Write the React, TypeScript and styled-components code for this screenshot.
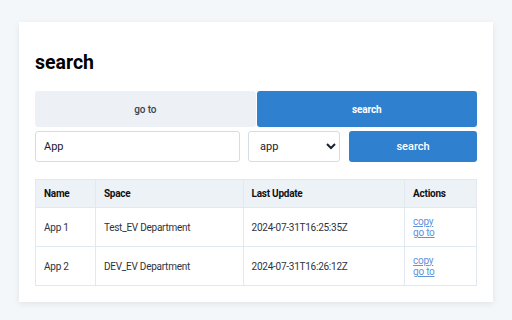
import React from "react";
import styled, { createGlobalStyle } from "styled-components";

const Global = createGlobalStyle`
  html, body { margin: 0; padding: 0; background: #f4f7fa; }
  body { font-family: Roboto, "Liberation Sans", Arial, sans-serif; color: #1a202c; }
  * { box-sizing: border-box; }
`;

const Page = styled.div`
  padding: 22px 19px 18px;
`;

const Card = styled.div`
  background: #ffffff;
  padding: 16px 16px 16px;
  box-shadow: 0 2px 6px rgba(0, 0, 0, 0.08);
`;

const Title = styled.h1`
  margin: 13px 0 16px;
  font-size: 19.5px;
  font-weight: 700;
  line-height: 24px;
  color: #000;
`;

const Tabs = styled.div`
  display: grid;
  grid-template-columns: 1fr 1fr;
  gap: 1px;
`;

const Tab = styled.button<{ $active?: boolean }>`
  height: 36px;
  border: none;
  border-radius: 3px;
  font-family: inherit;
  font-size: 10px;
  letter-spacing: -0.1px;
  font-weight: ${(p) => (p.$active ? 700 : 500)};
  background: ${(p) => (p.$active ? "#2f80cf" : "#edf1f5")};
  color: ${(p) => (p.$active ? "#ffffff" : "#3b4350")};
`;

const SearchRow = styled.div`
  display: grid;
  grid-template-columns: 205px 92px 1fr;
  gap: 8px;
  margin-top: 4px;
`;

const Input = styled.input`
  height: 31px;
  border: 1px solid #d5dce5;
  border-radius: 3px;
  padding: 0 8px;
  font-family: inherit;
  font-size: 11px;
  color: #1a202c;
`;

const Select = styled.select`
  height: 31px;
  border: 1px solid #d5dce5;
  border-radius: 3px;
  padding: 0 7px;
  font-family: inherit;
  font-size: 11px;
  color: #1a202c;
  background: #fff;
`;

const Button = styled.button`
  height: 31px;
  margin-left: 1px;
  border: none;
  border-radius: 3px;
  background: #2f80cf;
  color: #fff;
  font-family: inherit;
  font-size: 11px;
  font-weight: 500;
`;

const Table = styled.table`
  margin-top: 17px;
  width: 100%;
  border-collapse: collapse;
  font-size: 10px;
  letter-spacing: -0.25px;
`;

const Th = styled.th<{ $w: number }>`
  width: ${(p) => p.$w}px;
  height: 28px;
  padding: 0 8px;
  text-align: left;
  font-weight: 700;
  color: #111;
  background: #edf2f7;
  border: 1px solid #e2e8f0;
`;

const Td = styled.td`
  height: 39px;
  padding: 0 8px;
  color: #2d3340;
  border: 1px solid #e2e8f0;
  vertical-align: middle;
`;

const Links = styled.div`
  display: flex;
  flex-direction: column;
  line-height: 11.5px;
`;

const Link = styled.a`
  color: #5f93dc;
  text-decoration: underline;
  font-size: 10px;
`;

const rows = [
  { name: "App 1", space: "Test_EV Department", updated: "2024-07-31T16:25:35Z" },
  { name: "App 2", space: "DEV_EV Department", updated: "2024-07-31T16:26:12Z" },
];

export default function App() {
  return (
    <>
      <Global />
      <Page>
        <Card>
          <Title>search</Title>
          <Tabs>
            <Tab>go to</Tab>
            <Tab $active>search</Tab>
          </Tabs>
          <SearchRow>
            <Input defaultValue="App" />
            <Select defaultValue="app">
              <option value="app">app</option>
            </Select>
            <Button>search</Button>
          </SearchRow>
          <Table>
            <thead>
              <tr>
                <Th $w={60}>Name</Th>
                <Th $w={148}>Space</Th>
                <Th $w={162}>Last Update</Th>
                <Th $w={72}>Actions</Th>
              </tr>
            </thead>
            <tbody>
              {rows.map((r) => (
                <tr key={r.name}>
                  <Td>{r.name}</Td>
                  <Td>{r.space}</Td>
                  <Td>{r.updated}</Td>
                  <Td>
                    <Links>
                      <Link href="#">copy</Link>
                      <Link href="#">go to</Link>
                    </Links>
                  </Td>
                </tr>
              ))}
            </tbody>
          </Table>
        </Card>
      </Page>
    </>
  );
}
